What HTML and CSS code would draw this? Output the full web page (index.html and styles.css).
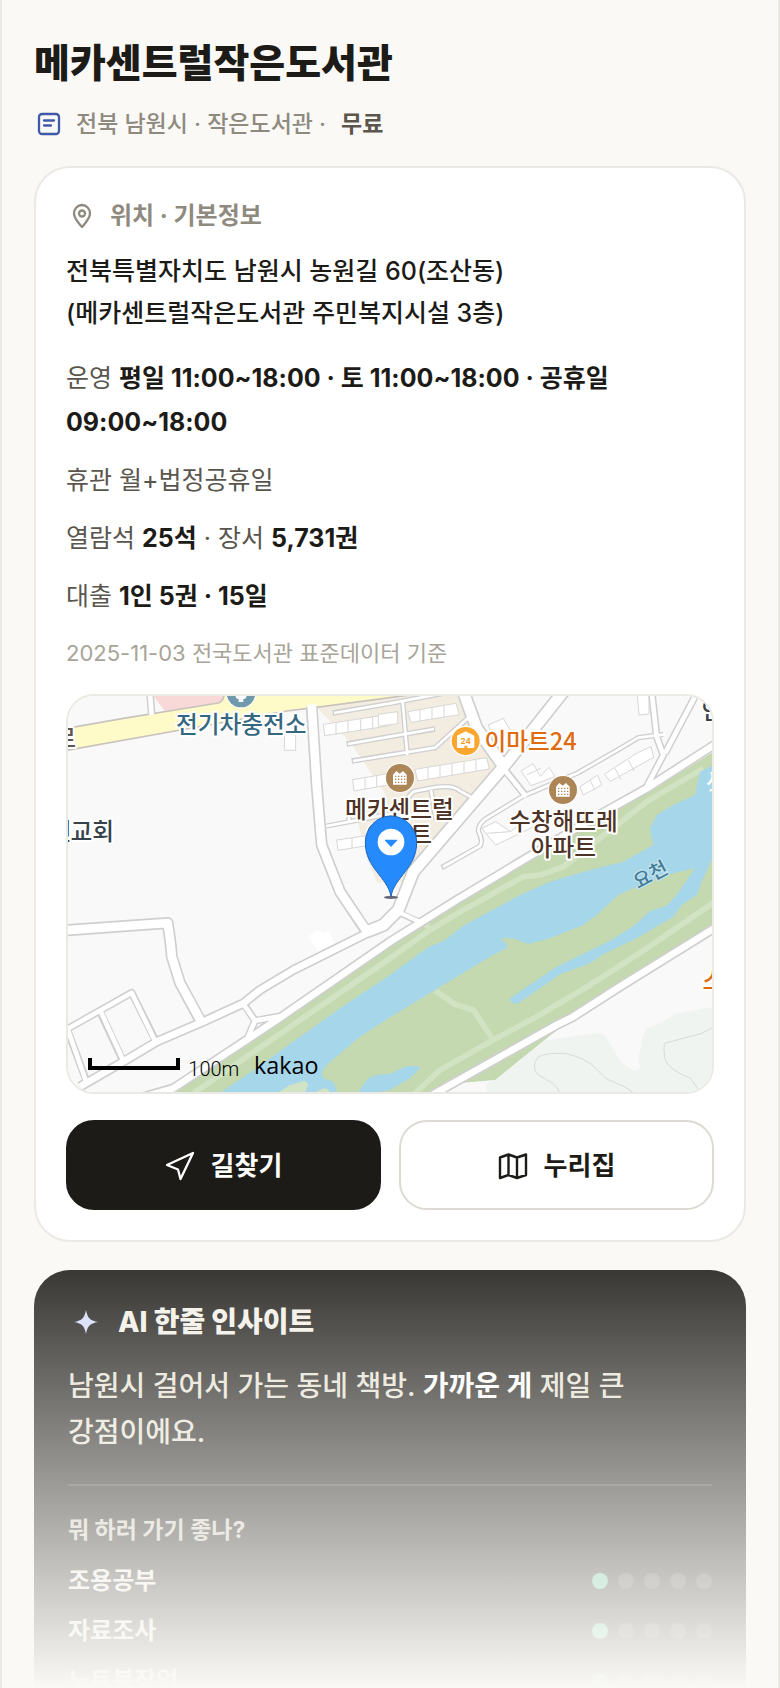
FILE: index.html
```html
<!DOCTYPE html>
<html lang="ko">
<head>
<meta charset="utf-8">
<meta name="viewport" content="width=device-width, initial-scale=1">
<title>메카센트럴작은도서관</title>
<link rel="stylesheet" href="styles.css">
</head>
<body>
<main class="page">
  <header class="head">
    <h1 class="title">메카센트럴작은도서관</h1>
    <p class="meta">
      <svg class="meta-icon" viewBox="0 0 26 26" fill="none" stroke="#3f5aa9" stroke-width="2.300" stroke-linecap="round" aria-hidden="true"><rect x="3" y="3" width="20" height="20" rx="3"/><path d="M8 9.500h10M8 14.500h7"/></svg>
      <span>전북 남원시 · 작은도서관 ·</span>
      <strong class="free">무료</strong>
    </p>
  </header>

  <section class="card">
    <h2 class="card-title">
      <svg class="card-icon" viewBox="0 0 28 28" fill="none" stroke="#8f8a7f" stroke-width="2.300" stroke-linejoin="round" aria-hidden="true"><path d="M14 25C11 21.500 6 16.500 6 11.500a8 8.500 0 0 1 16 0C22 16.500 17 21.500 14 25z"/><circle cx="14" cy="11.500" r="3"/></svg>
      위치 · 기본정보
    </h2>
    <p class="address">전북특별자치도 남원시 농원길 60(조산동)<br>(메카센트럴작은도서관 주민복지시설 3층)</p>
    <div class="facts">
      <p>운영 <strong>평일 11:00~18:00 · 토 11:00~18:00 · 공휴일 09:00~18:00</strong></p>
      <p>휴관 월+법정공휴일</p>
      <p>열람석 <strong>25석</strong> · 장서 <strong>5,731권</strong></p>
      <p>대출 <strong>1인 5권 · 15일</strong></p>
    </div>
    <p class="source">2025-11-03 전국도서관 표준데이터 기준</p>

    <div class="map">
      <svg class="map-art" viewBox="24 33 1932 1188" preserveAspectRatio="xMidYMid slice" role="img" aria-label="지도">
        <defs>
          <g id="apt"><circle r="45" fill="#fff"/><circle r="42" fill="#ac8657"/><path d="M-21 20V-10l10-11 10 8 10-8 11 11v30z" fill="#fff"/><path d="M-15-5h31M-15 4h31M-15 13h31" stroke="#ac8657" stroke-width="4" stroke-dasharray="4 5"/></g>
        </defs>
        <path fill="#f9f9f9" d="M0 0h2000v1300H0z"/>
        <!-- housing blocks -->
        <path fill="#f3ede1" d="M768 65 1000 25h190l50 70 90 150-90 105-190 220-15 22h-84l-30-72-25-100-5-30q20-25 55-30l30-33-105-155z"/>
        <path fill="#fff" d="M745 755l25-20 25 10 10-7 20 35-50 27z"/>
        <!-- main street -->
        <path fill="#f9d9d8" d="M278 30l38 50 170-28 15-22z"/>
        <path fill="#fffbc9" stroke="#c9c3bd" stroke-width="5" d="M15 131 190 100 475 54q16-4 18-30h600L770 67 680 78 15 197z"/>
        <!-- riverside park -->
        <path fill="#c4d9af" d="M1970 195 1750 330 1550 440 1180 650 990 780 820 895 580 1065 320 1230h790l380-202 90-50 380-245z"/>
        <path fill="#eff4f1" d="M1455 1067l75-12 80-10q22 0 30 15 40 75 60 82 15 15 30 15l12-12q-12-22 0-55 5-45 18-60l45-20 45-25 110-19v260H1280v-30l25-12z"/>
        <path fill="#c4d9af" d="M1495 1032l-190 153-95 8-45 20z"/>
        <g fill="none" stroke="#d5dbd7" stroke-width="3"><path d="M1500 1225q-10-25-30-35l-35-20q-24-25 0-55 30-12 80-10 65 15 92 45l30 30 55 25 35 22M1956 1028l-30 17-113 30q-5 50 14 67 20 20 65 38l30 45"/></g>
        <g fill="none" stroke="#d1e3c3" stroke-width="17" stroke-linejoin="round"><path d="M1930 250 1760 350 1510 545 1440 570 1390 575 1210 675 1110 735 990 820 400 1225M1965 650 1760 790 1590 900 1430 995 1300 1065 1140 1155 1060 1230M1125 917l60 41 55 17 60 90M1095 715l18 22"/></g>
        <path fill="#a5d6ea" d="M1970 235 1920 260 1905 330 1840 360 1790 390 1770 430 1780 480 1690 530 1590 555 1470 590 1380 630 1205 725 1155 765 1100 790 990 870 900 930 840 970 560 1170 470 1230H836L820 1190 790 1180 785 1165 800 1140 900 1055 990 997 1125 915 1290 815 1340 790 1342 778 1320 760 1360 760 1405 777 1470 760 1570 720 1610 690 1675 630 1740 600 1820 570 1905 550 1850 630 1820 662 1770 678 1725 720 1655 765 1490 845 1350 940Q1350 960 1375 955L1500 868 1590 835 1635 805 1730 760 1840 695 1865 660 1910 630 1925 590 1970 490z"/>
        <path fill="#a5d6ea" d="M885 1235l35-50q20-20 70-18l45-22q45-5 45 5l-30 30-60 35z"/>
        <path fill="#d1e3c3" d="M650 1226l38-25 45-13q15 5 10 16l-10 24zM755 1228l30-16q20-8 28 18z"/>
        <!-- buildings -->
        <g fill="#fff" stroke="#d8d7d5" stroke-width="3">
          <path d="M674 145l33 5v46h-34zM790 118l200-30v34l-196 30zM878 284l105-18v34l-101 18zM830 465l90-13v30l-86 14z"/>
          <path d="M1043 80l145-25 10 34-145 23zM955 88l58-8v36l-58 8zM1065 253l215-35 8 34-215 36zM1285 120l45-20 20 35-50 25z"/>
          <path d="M1732 30l5 60 30-3V30zM1383 258l36-22 22 38 26-27 18 28-72 27zM1560 305l53-35 12 30-55 30zM1633 268l100-65 40-18 8 32-130 72zM1265 430l42-20 45 30 50-40 20 25-115 55z"/>
        </g>
        <path d="M828 113v36M864 108v36M902 103v36M938 97v36M915 278v34M950 272v34M876 458v34M1080 73v34M1116 68v34M1152 62v34M1104 248v34M1140 242v34M1176 236v34M1212 230v34M1248 224v34M1400 270l42-20M1280 445l70-5M1590 285l15 30M1665 250l18 34M1705 225l18 34" stroke="#d8d7d5" stroke-width="3"/>
        <!-- streets: casing, then surface -->
        <g fill="none" stroke-linejoin="round">
          <g stroke="#cfcfcf">
            <path stroke-width="16" d="M818 84 990 55l160-30M860 177l130-22 135-23M875 228l200-32 50-8 50-45 50-45M800 423l200-38 60-65 60-12q60-10 80 10l40 22M1028 50l14 160M1113 315l15 90M867 385v30M1145 548l115-65q10-15-5-45 0-20 20-35l115-70 165-70 130-75 50-30 75-10"/>
            <path stroke-width="23" d="M270 25l5 60M1335 255l60 75M1775 20l15 135 20 55-50 95M1910 25l-95 180M15 1036l200-113 75 150M120 980l70 150M24 1040l58 155M550 955l35 52 75-13M585 1007l-25 60"/>
            <path stroke-width="30" d="M1970 175 1760 310 1590 405 1190 645 990 770 650 1005 340 1210 200 1250M1970 725 1680 905 1540 995 1490 1020 1090 1245"/>
            <path stroke-width="30" d="M930 740 700 855 600 915 550 955 430 1010 290 1070 190 1130 60 1205"/>
            <path stroke-width="36" d="M755 65l15 235 15 180 55 140 30 45 50 75M15 736l308-22q12 80 12 100l25 80 65 120"/>
            <path stroke-width="42" d="M1510 20 1335 240 1060 560 1015 675 970 720 920 740M1210 20l40 110 85 120"/>
            <path stroke-width="20" d="M1010 680l70 32"/>
          </g>
          <g stroke="#fff">
            <path stroke-width="8" d="M822 84 990 55l160-30M864 177l126-22 132-23M879 228l196-32 50-8 50-45 50-45M800 423l200-38 60-65 60-12q60-10 80 10l40 22M1028 50l14 160M1113 315l15 90M867 385v30M1149 546l111-63q10-15-5-45 0-20 20-35l115-70 165-70 130-75 50-30 80-10"/>
            <path stroke-width="14" d="M270 25l5 65M1330 250l69 85M1775 20l15 135 20 55-50 95M1910 25l-95 180M15 1036l200-113 75 155M120 975l73 158M24 1035l58 165M545 950l40 57 75-13M585 1007l-28 65"/>
            <path stroke-width="20" d="M1970 175 1760 310 1590 405 1190 645 990 770 650 1005 340 1210 200 1250M1970 725 1680 905 1540 995 1490 1020 1090 1245"/>
            <path stroke-width="20" d="M930 740 700 855 600 915 550 955 430 1010 290 1070 190 1130 60 1205"/>
            <path stroke-width="26" d="M755 58l15 242 15 180 55 140 30 45 55 80M15 736l308-22q12 80 12 100l25 80 68 124"/>
            <path stroke-width="32" d="M1510 20 1335 240 1060 560 1015 675 970 720 920 740M1210 20l40 110 85 120"/>
            <path stroke-width="12" d="M1005 676l85 40"/>
          </g>
        </g>
        <!-- place names -->
        <g class="label" text-anchor="middle">
          <text x="544" y="143" fill="#35677f">전기차충전소</text>
          <text x="97" y="466" fill="#36424c">교회</text>
          <text x="2" y="466" fill="#36424c">인</text>
          <text x="15" y="185" fill="#5d574e">로</text>
          <text x="1412" y="196" fill="#df6c10">이마트24</text>
          <text x="1018" y="398" fill="#4d3326">메카센트럴</text>
          <text x="1018" y="474" fill="#4d3326">아파트</text>
          <text x="1510" y="435" fill="#4d3326">수창해뜨레</text>
          <text x="1510" y="512" fill="#4d3326">아파트</text>
          <text x="1958" y="102" fill="#36424c">안</text>
          <text x="1960" y="912" fill="#df6c10">스</text>
          <text class="label-water" x="1771" y="590" transform="rotate(-28 1771 568)" fill="#447b94">요천</text>
          <text class="label-white" x="1968" y="312" transform="rotate(-25 1968 290)" fill="#fff">소</text>
        </g>
        <circle cx="543" cy="24" r="46" fill="#fff"/><circle cx="543" cy="24" r="43" fill="#7099ad"/><path d="M527 25h32v10q0 6-9 7v9h-14v-9q-9-1-9-7z" fill="#fff"/>
        <use href="#apt" x="1020" y="279"/><use href="#apt" x="1509" y="315"/>
        <circle cx="1217" cy="168" r="46" fill="#fff"/><circle cx="1217" cy="168" r="42" fill="#fba62e"/><path d="M1193 187v-34l24-12 24 12v34z" fill="#fff" stroke="#fff" stroke-width="4" stroke-linejoin="round"/><path d="M1213 192v-10h9v10z" fill="#fba62e"/><text class="tiny" x="1217" y="177" text-anchor="middle" fill="#f39a22">24</text>
        <!-- selected place -->
        <ellipse cx="993" cy="637" rx="21" ry="5" fill="#667"/>
        <path d="M993 634C982 575 916 550 916 472a77 79 0 0 1 154 0C1070 550 1004 575 993 634z" fill="#258bfc" stroke="#1763c4" stroke-width="3"/>
        <circle cx="993" cy="471" r="40" fill="#fff"/><path d="M976 464h34q3 0 1 3l-18 19-18-19q-2-3 1-3z" fill="#258bfc"/>
        <!-- scale -->
        <path d="M90 1119v30h264v-30" fill="none" stroke="#000" stroke-width="12"/>
        <text class="scale" x="385" y="1173">100m</text>
        <text class="brand" x="582" y="1166">kakao</text>
      </svg>
    </div>

    <div class="actions">
      <button class="btn btn-dark" type="button">
        <svg class="btn-icon" viewBox="0 0 30 30" fill="none" stroke="currentColor" stroke-width="2.300" stroke-linejoin="round" aria-hidden="true"><path d="M28 2 15.500 28 13 18.500 2 14z"/></svg>
        길찾기
      </button>
      <button class="btn btn-light" type="button">
        <svg class="btn-icon" viewBox="0 0 30 30" fill="none" stroke="currentColor" stroke-width="2.400" stroke-linejoin="round" aria-hidden="true"><path d="M2 6.500 10.500 3.500 19 6.500 28 3.500V24L19 27 10.500 24 2 27zM10.500 3.500V24M19 6.500V27"/></svg>
        누리집
      </button>
    </div>
  </section>

  <section class="insight">
    <h2 class="insight-title">
      <svg class="spark" viewBox="0 0 36 36" aria-hidden="true"><path d="M18 6C19.500 14 22 16.500 30 18 22 19.500 19.500 22 18 30 16.500 22 14 19.500 6 18 14 16.500 16.500 14 18 6z" fill="#d3dbfb"/></svg>
      AI 한줄 인사이트
    </h2>
    <p class="insight-text">남원시 걸어서 가는 동네 책방. <strong>가까운 게</strong> 제일 큰 강점이에요.</p>
    <div class="uses">
      <h3 class="uses-title">뭐 하러 가기 좋나?</h3>
      <ul class="uses-list">
        <li><span>조용공부</span><span class="dots" role="img" aria-label="5점 중 1점"><i class="on"></i><i></i><i></i><i></i><i></i></span></li>
        <li><span>자료조사</span><span class="dots" role="img" aria-label="5점 중 1점"><i class="on"></i><i></i><i></i><i></i><i></i></span></li>
        <li><span>노트북작업</span><span class="dots" role="img" aria-label="5점 중 1점"><i class="on"></i><i></i><i></i><i></i><i></i></span></li>
      </ul>
    </div>
  </section>
  <div class="fade"></div>
</main>
</body>
</html>
```
FILE: styles.css
```css
* { box-sizing: border-box; }
body { margin: 0; background: #faf9f6; color: #1c1b17; font-family: Inter, "Noto Sans CJK KR", sans-serif; word-break: keep-all; }
h1, h2, h3, p, ul { margin: 0; padding: 0; }
ul { list-style: none; }
svg { display: block; flex: none; }
.page { position: relative; height: 100vh; overflow: hidden; padding: 35px 32px 0; border: 2px solid #ebe9e3; border-width: 0 2px; }
.title { font-size: 39px; line-height: 56px; font-weight: 800; }
.meta { display: flex; align-items: center; margin-top: 15px; font-size: 23px; line-height: 36px; font-weight: 500; color: #8f8a7f; }
.meta-icon { width: 26px; height: 26px; margin: 0 14px 0 2px; }
.free { margin-left: 15px; font-weight: 700; color: #5a564e; }
.card { margin-top: 24px; padding: 30px; border: 2px solid #ebe9e3; border-radius: 36px; background: #fff; }
.card-title { display: flex; align-items: center; gap: 14px; padding-left: 2px; font-size: 24px; line-height: 36px; font-weight: 700; color: #8f8a7f; }
.card-icon { width: 28px; height: 28px; }
.address { margin-top: 16px; font-size: 25px; line-height: 42px; font-weight: 500; }
.facts { display: flex; flex-direction: column; gap: 14px; margin-top: 22px; font-size: 25px; line-height: 44px; font-weight: 400; color: #5a564e; }
.facts strong { font-weight: 700; color: #1c1b17; }
.source { margin-top: 16px; font-size: 22px; line-height: 38px; font-weight: 400; color: #a8a498; }
.map { margin-top: 22px; border: 2px solid #ebe9e3; border-radius: 28px; overflow: hidden; aspect-ratio: 648 / 400; }
.map-art { width: 100%; height: 100%; }
.label { font: 500 71px "Noto Sans CJK KR", sans-serif; stroke: #fff; stroke-width: 12px; stroke-linejoin: round; paint-order: stroke; }
.label-water { font-size: 58px; stroke: #bfe2ef; stroke-width: 8px; }
.label-white { stroke: none; }
.tiny { font: 700 24px Inter, sans-serif; }
.scale { font: 300 60px Roboto, sans-serif; }
.brand { font: 500 70px "Open Sans", sans-serif; }
.actions { display: grid; grid-template-columns: 1fr 1fr; gap: 18px; margin-top: 26px; }
.btn { display: flex; align-items: center; justify-content: center; gap: 16px; height: 90px; padding: 2px 0 0; border: 2px solid #1c1b17; border-radius: 28px; font-family: inherit; font-size: 26px; line-height: 40px; font-weight: 700; }
.btn-dark { background: #1c1b17; color: #fff; }
.btn-light { border-color: #dddad1; background: #fff; color: #1c1b17; }
.btn-icon { width: 30px; height: 30px; }
.insight { margin-top: 28px; padding: 32px 34px; border-radius: 36px; background: #1c1b17; color: #fff; }
.insight-title { display: flex; align-items: center; gap: 14px; font-size: 28px; line-height: 40px; font-weight: 800; color: #f3f0e8; }
.spark { width: 36px; height: 36px; }
.insight-text { margin-top: 21px; font-size: 28px; line-height: 46px; font-weight: 500; color: #e6e2d6; }
.insight-text strong { font-weight: 700; color: #fff; }
.uses { margin-top: 29px; padding-top: 26px; border-top: 2px solid #3a3935; }
.uses-title { font-size: 23px; line-height: 36px; font-weight: 700; color: #d0ccbf; }
.uses-list { margin-top: 8px; font-size: 24px; line-height: 50px; font-weight: 600; color: #f3f0e8; }
.uses-list li { display: flex; align-items: center; justify-content: space-between; }
.dots { display: flex; gap: 10px; }
.dots i { width: 16px; height: 16px; border-radius: 50%; background: #42413d; }
.dots .on { background: #5cc798; }
.fade { position: absolute; inset: auto 0 0; height: 480px; background: linear-gradient(rgba(250, 249, 246, 0), #faf9f6); pointer-events: none; }
```
